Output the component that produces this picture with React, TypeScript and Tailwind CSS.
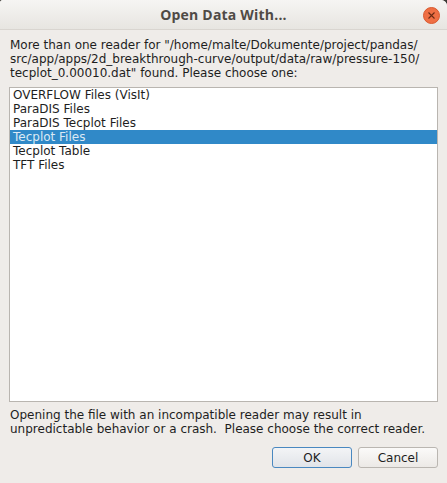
export default function App() {
  const readers = [
    'OVERFLOW Files (VisIt)',
    'ParaDIS Files',
    'ParaDIS Tecplot Files',
    'Tecplot Files',
    'Tecplot Table',
    'TFT Files',
  ];
  const selected = 3;

  return (
    <div className="w-[447px] h-[483px] bg-[#3c3b37] overflow-hidden">
      <div className="flex flex-col w-full h-full bg-[#efece9] rounded-tl-[3px] rounded-tr-[6px] overflow-hidden font-['DejaVu_Sans',sans-serif] text-[12px] leading-[14px] text-[#1e1e1e]">
        {/* title bar */}
        <div className="relative flex items-center justify-center h-[30px] shrink-0 bg-gradient-to-b from-[#f6f5f3] to-[#e7e5e1] border-b border-[#d9d5d0]">
          <span className="font-['Open_Sans',sans-serif] font-bold text-[14px] text-[#4f4a45] tracking-[0.2px]">
            Open Data With...
          </span>
          <div className="absolute right-[7px] top-[7px] flex items-center justify-center w-[17px] h-[17px] rounded-full bg-[#ef6f44] border border-[#d95a30]">
            <svg width="7" height="7" viewBox="0 0 7 7">
              <path d="M0.5 0.5 L6.5 6.5 M6.5 0.5 L0.5 6.5" stroke="#6a2a14" strokeWidth="1.1" />
            </svg>
          </div>
        </div>

        {/* body */}
        <div className="flex flex-col flex-1 px-[9px] pt-[8px] pb-[14px]">
          <p className="pl-px">
            More than one reader for "/home/malte/Dokumente/project/pandas/
            <br />
            src/app/apps/2d_breakthrough-curve/output/data/raw/pressure-150/
            <br />
            tecplot_0.00010.dat" found. Please choose one:
          </p>

          <div className="mt-[7px] h-[315px] bg-white border border-[#b9b5b0]">
            {readers.map((r, i) => (
              <div
                key={r}
                className={
                  i === selected
                    ? 'h-[14px] pl-[3px] bg-[#3089c8] text-[#dbe9f5]'
                    : 'h-[14px] pl-[3px]'
                }
              >
                {r}
              </div>
            ))}
          </div>

          <p className="mt-[6px] pl-px">
            Opening the file with an incompatible reader may result in
            <br />
            unpredictable behavior or a crash.&nbsp; Please choose the correct reader.
          </p>

          <div className="flex justify-end gap-[6px] mt-[11px]">
            <button className="w-[80px] h-[21px] rounded-[3px] border border-[#4a88c0] bg-gradient-to-b from-[#f3f4f6] to-[#e1e4e9] text-[12px] text-[#1e1e1e]">
              OK
            </button>
            <button className="w-[80px] h-[21px] rounded-[3px] border border-[#bab6b1] bg-gradient-to-b from-[#fbfaf9] to-[#ece9e6] text-[12px] text-[#1e1e1e]">
              Cancel
            </button>
          </div>
        </div>
      </div>
    </div>
  );
}
